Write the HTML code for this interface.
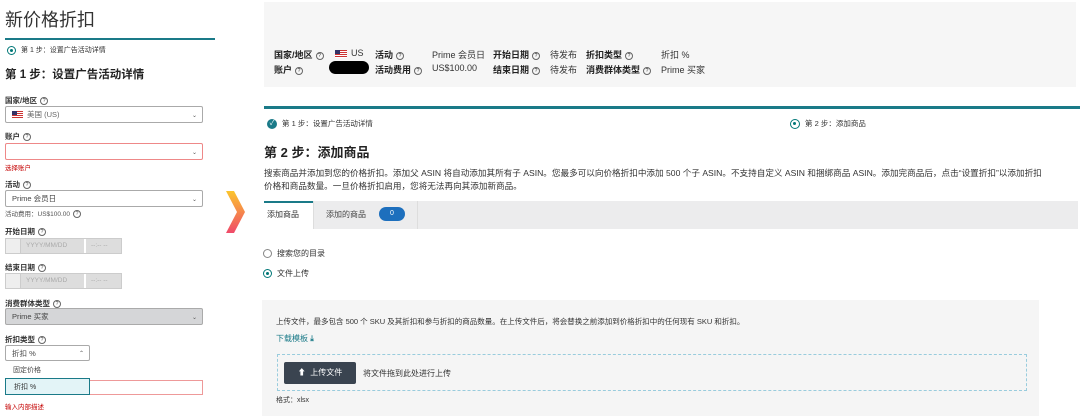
<!DOCTYPE html>
<html><head><meta charset="utf-8"><style>
*{margin:0;padding:0;box-sizing:border-box}
body{width:1080px;height:419px;background:#fff;font-family:"Liberation Sans","Noto Sans CJK SC",sans-serif;color:#222;position:relative;overflow:hidden;font-size:8px}
.a{position:absolute;white-space:nowrap}
.lb{font-size:7.5px;font-weight:bold;color:#333}
.h{display:inline-block;width:8px;height:8px;border:1px solid #666;border-radius:50%;font-size:5px;line-height:6px;text-align:center;vertical-align:middle;margin-left:3px;font-weight:normal}
.sel{position:absolute;border:1px solid #aaa;border-radius:2px;background:#fff;font-size:7.5px;color:#444;padding-left:6px;display:flex;align-items:center}
.sel .c{position:absolute;right:5px;top:50%;margin-top:-3px;font-size:6px;color:#555}
.err{color:#c40000;font-size:6.5px}
.flag{display:inline-block;width:11px;height:7px;background:repeating-linear-gradient(#c33 0 1px,#fff 1px 2px);position:relative;vertical-align:middle;margin-right:4px}
.flag:before{content:"";position:absolute;left:0;top:0;width:5px;height:4px;background:#336}
.ri{font-size:9px;color:#333}
.rb{font-size:9px;font-weight:bold;color:#222}
.radio{display:inline-block;width:9px;height:9px;border:1px solid #888;border-radius:50%;vertical-align:middle;position:relative;margin-right:5px}
.radio.on{border-color:#077}
.radio.on:after{content:"";position:absolute;left:2px;top:2px;width:3px;height:3px;border-radius:50%;background:#077}
</style></head><body>
<!-- left -->
<div class="a" style="left:5px;top:6px;font-size:18px;color:#333">新价格折扣</div>
<div class="a" style="left:5px;top:38px;width:210px;height:2px;background:#1a7a88"></div>
<div class="a" style="left:7px;top:45px;font-size:7px;color:#333"><span class="radio on"></span>第 1 步：设置广告活动详情</div>
<div class="a" style="left:5px;top:66px;font-size:11.5px;font-weight:bold">第 1 步：设置广告活动详情</div>
<div class="a lb" style="left:5px;top:95px">国家/地区<span class="h">?</span></div>
<div class="sel" style="left:5px;top:106px;width:198px;height:17px"><span class="flag"></span><span style="color:#666">美国 (US)</span><span class="c">⌄</span></div>
<div class="a lb" style="left:5px;top:131px">账户<span class="h">?</span></div>
<div class="sel" style="left:5px;top:143px;width:198px;height:17px;border-color:#e88"><span class="c">⌄</span></div>
<div class="a err" style="left:5px;top:162px">选择账户</div>
<div class="a lb" style="left:5px;top:179px">活动<span class="h">?</span></div>
<div class="sel" style="left:5px;top:190px;width:198px;height:17px">Prime 会员日<span class="c">⌄</span></div>
<div class="a" style="left:5px;top:208px;font-size:6.5px;color:#555">活动费用：US$100.00<span class="h">?</span></div>
<div class="a lb" style="left:5px;top:226px">开始日期<span class="h">?</span></div>
<div class="a" style="left:5px;top:238px;width:117px;height:16px;border:1px solid #ccc;background:#ddd"><div class="a" style="left:0;top:0;width:15px;height:14px;background:#eee;border-right:1px solid #ccc"></div><div class="a" style="left:20px;top:3px;font-size:6.5px;color:#aaa">YYYY/MM/DD</div><div class="a" style="left:78px;top:0;width:2px;height:14px;background:#fff"></div><div class="a" style="left:85px;top:3px;font-size:6.5px;color:#aaa">--:-- --</div></div>
<div class="a lb" style="left:5px;top:262px">结束日期<span class="h">?</span></div>
<div class="a" style="left:5px;top:273px;width:117px;height:16px;border:1px solid #ccc;background:#ddd"><div class="a" style="left:0;top:0;width:15px;height:14px;background:#eee;border-right:1px solid #ccc"></div><div class="a" style="left:20px;top:3px;font-size:6.5px;color:#aaa">YYYY/MM/DD</div><div class="a" style="left:78px;top:0;width:2px;height:14px;background:#fff"></div><div class="a" style="left:85px;top:3px;font-size:6.5px;color:#aaa">--:-- --</div></div>
<div class="a lb" style="left:5px;top:298px">消费群体类型<span class="h">?</span></div>
<div class="sel" style="left:5px;top:308px;width:198px;height:17px;background:#d5d6d8">Prime 买家<span class="c">⌄</span></div>
<div class="a lb" style="left:5px;top:334px">折扣类型<span class="h">?</span></div>
<div class="sel" style="left:5px;top:345px;width:85px;height:16px">折扣 %<span class="c">⌃</span></div>
<div class="a" style="left:13px;top:365px;font-size:7px;color:#444">固定价格</div>
<div class="a" style="left:89px;top:380px;width:114px;height:15px;border:1px solid #e99"></div>
<div class="a" style="left:5px;top:378px;width:85px;height:17px;border:1px solid #1a7a88;background:#e3f4f7;font-size:7px;padding:3px 8px;color:#333">折扣 %</div>
<div class="a err" style="left:5px;top:401px">输入内部描述</div>
<!-- arrow -->
<svg class="a" style="left:222px;top:188px" width="26" height="48" viewBox="0 0 26 48"><defs><linearGradient id="g" x1="0" y1="0" x2="0" y2="1"><stop offset="0" stop-color="#fbc52d"/><stop offset="1" stop-color="#f04a6a"/></linearGradient></defs><path d="M4 3h8l11 21-11 21H4l11-21z" fill="url(#g)"/></svg>
<!-- right -->
<div class="a" style="left:264px;top:2px;width:812px;height:85px;background:#f6f6f6"></div>
<div class="a rb" style="left:274px;top:48px">国家/地区<span class="h">?</span></div>
<div class="a rb" style="left:274px;top:63px">账户<span class="h">?</span></div>
<div class="a ri" style="left:335px;top:48px"><span class="flag" style="width:12px;height:8px"></span>US</div>
<div class="a" style="left:329px;top:61px;width:40px;height:13px;background:#000;border-radius:7px"></div>
<div class="a rb" style="left:375px;top:48px">活动<span class="h">?</span></div>
<div class="a rb" style="left:375px;top:63px">活动费用<span class="h">?</span></div>
<div class="a ri" style="left:432px;top:48px">Prime 会员日</div>
<div class="a ri" style="left:432px;top:63px">US$100.00</div>
<div class="a rb" style="left:493px;top:48px">开始日期<span class="h">?</span></div>
<div class="a rb" style="left:493px;top:63px">结束日期<span class="h">?</span></div>
<div class="a ri" style="left:550px;top:48px">待发布</div>
<div class="a ri" style="left:550px;top:63px">待发布</div>
<div class="a rb" style="left:586px;top:48px">折扣类型<span class="h">?</span></div>
<div class="a rb" style="left:586px;top:63px">消费群体类型<span class="h">?</span></div>
<div class="a ri" style="left:661px;top:48px">折扣 %</div>
<div class="a ri" style="left:661px;top:63px">Prime 买家</div>
<div class="a" style="left:264px;top:106px;width:816px;height:3px;background:#1a7a88"></div>
<div class="a" style="left:267px;top:118px;font-size:7.5px;color:#333"><span style="display:inline-block;width:10px;height:10px;border-radius:50%;background:#1a7a88;color:#fff;font-size:7px;line-height:10px;text-align:center;vertical-align:middle;margin-right:5px">✓</span>第 1 步：设置广告活动详情</div>
<div class="a" style="left:790px;top:118px;font-size:7.5px;color:#333"><span class="radio on" style="width:10px;height:10px"></span>第 2 步：添加商品</div>
<div class="a" style="left:264px;top:142px;font-size:13px;font-weight:bold">第 2 步：添加商品</div>
<div class="a" style="left:264px;top:167px;font-size:8.6px;color:#333;line-height:13px">搜索商品并添加到您的价格折扣。添加父 ASIN 将自动添加其所有子 ASIN。您最多可以向价格折扣中添加 500 个子 ASIN。不支持自定义 ASIN 和捆绑商品 ASIN。添加完商品后，点击“设置折扣”以添加折扣<br>价格和商品数量。一旦价格折扣启用，您将无法再向其添加新商品。</div>
<div class="a" style="left:264px;top:201px;width:814px;height:28px;background:#ececed"></div>
<div class="a" style="left:264px;top:201px;width:49px;height:28px;background:#fff;border-top:2px solid #1a7a88"></div>
<div class="a" style="left:267px;top:209px;font-size:8px;color:#333">添加商品</div>
<div class="a" style="left:313px;top:201px;width:1px;height:28px;background:#ddd"></div>
<div class="a" style="left:326px;top:209px;font-size:8px;color:#444">添加的商品</div>
<div class="a" style="left:379px;top:207px;width:26px;height:14px;border-radius:7px;background:#1d6fbd;color:#fff;font-size:7px;text-align:center;line-height:14px">0</div>
<div class="a" style="left:417px;top:201px;width:1px;height:28px;background:#ddd"></div>
<div class="a" style="left:263px;top:248px;font-size:8px;color:#333"><span class="radio"></span>搜索您的目录</div>
<div class="a" style="left:263px;top:268px;font-size:8px;color:#333"><span class="radio on"></span>文件上传</div>
<div class="a" style="left:262px;top:300px;width:777px;height:116px;background:#f5f5f5"></div>
<div class="a" style="left:276px;top:316px;font-size:7.5px;color:#333">上传文件，最多包含 500 个 SKU 及其折扣和参与折扣的商品数量。在上传文件后，将会替换之前添加到价格折扣中的任何现有 SKU 和折扣。</div>
<div class="a" style="left:276px;top:333px;font-size:8px;color:#1a7a88">下载模板 <b>⤓</b></div>
<div class="a" style="left:277px;top:354px;width:750px;height:37px;border:1px dashed #9cd"></div>
<div class="a" style="left:284px;top:362px;width:72px;height:22px;background:#3a4450;border-radius:2px;color:#fff;font-size:8px;line-height:22px;text-align:center">⬆&nbsp; 上传文件</div>
<div class="a" style="left:363px;top:368px;font-size:8px;color:#333">将文件拖到此处进行上传</div>
<div class="a" style="left:276px;top:395px;font-size:7px;color:#333">格式：xlsx</div>
</body></html>
